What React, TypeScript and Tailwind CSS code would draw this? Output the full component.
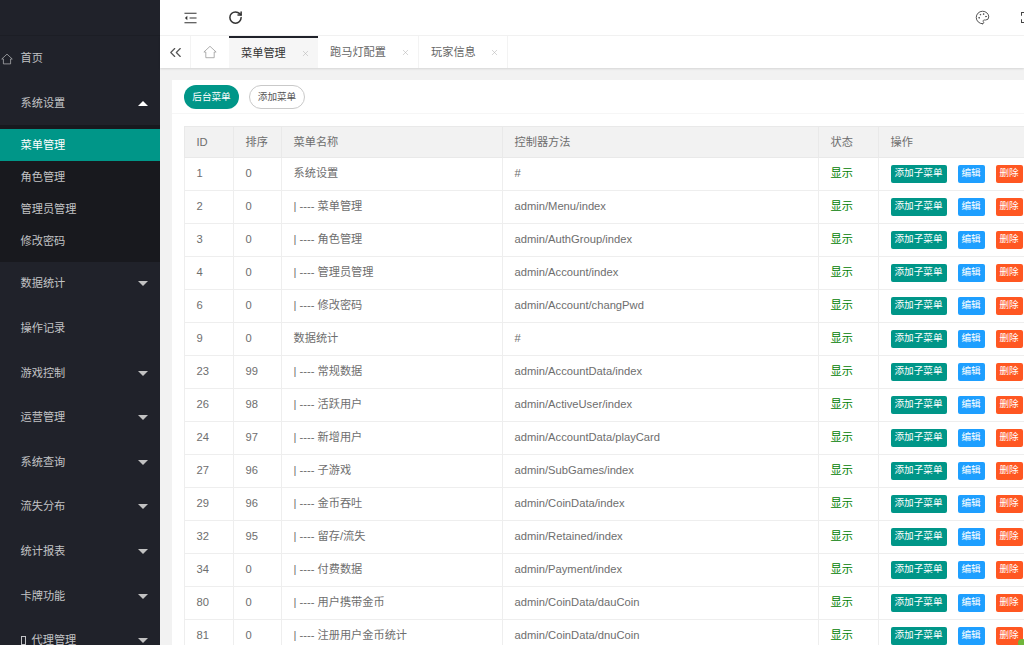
import React from 'react';
import { ChevronsLeft, Palette, RotateCw, X } from 'lucide-react';

const FONT = "font-['Liberation_Sans','Noto_Sans_CJK_SC',sans-serif]";

const menuTop = ['数据统计', '操作记录', '游戏控制', '运营管理', '系统查询', '流失分布', '统计报表', '卡牌功能'];
const subMenu = ['菜单管理', '角色管理', '管理员管理', '修改密码'];

const rows = [
  ['1', '0', '系统设置', '#'],
  ['2', '0', '| ---- 菜单管理', 'admin/Menu/index'],
  ['3', '0', '| ---- 角色管理', 'admin/AuthGroup/index'],
  ['4', '0', '| ---- 管理员管理', 'admin/Account/index'],
  ['6', '0', '| ---- 修改密码', 'admin/Account/changPwd'],
  ['9', '0', '数据统计', '#'],
  ['23', '99', '| ---- 常规数据', 'admin/AccountData/index'],
  ['26', '98', '| ---- 活跃用户', 'admin/ActiveUser/index'],
  ['24', '97', '| ---- 新增用户', 'admin/AccountData/playCard'],
  ['27', '96', '| ---- 子游戏', 'admin/SubGames/index'],
  ['29', '96', '| ---- 金币吞吐', 'admin/CoinData/index'],
  ['32', '95', '| ---- 留存/流失', 'admin/Retained/index'],
  ['34', '0', '| ---- 付费数据', 'admin/Payment/index'],
  ['80', '0', '| ---- 用户携带金币', 'admin/CoinData/dauCoin'],
  ['81', '0', '| ---- 注册用户金币统计', 'admin/CoinData/dnuCoin'],
];

function HomeIcon({ className }: { className: string }) {
  return (
    <svg viewBox="0 0 16 16" fill="none" stroke="currentColor" strokeWidth="0.9" className={className}>
      <path d="M1 8 8 1.5 15 8H12.8V14.5H3.2V8Z" />
    </svg>
  );
}

function Arrow({ up }: { up?: boolean }) {
  return (
    <span
      className={
        up
          ? 'h-0 w-0 border-x-[5px] border-b-[5px] border-x-transparent border-b-white'
          : 'h-0 w-0 border-x-[5px] border-t-[5px] border-x-transparent border-t-[#c2c2c2]'
      }
    />
  );
}

function Sidebar() {
  return (
    <aside className="flex w-40 shrink-0 flex-col bg-[#20222a] text-[11.2px] text-[#c2c3c5]">
      <div className="h-9 shrink-0 border-b border-[#1c1e25]" />
      <div className="relative flex h-[45px] shrink-0 items-center pl-[20.5px]">
        <HomeIcon className="absolute left-[1px] top-[17px] h-[12px] w-[12px]" />
        首页
      </div>
      <div className="flex h-[44px] shrink-0 items-center justify-between pl-[20.5px] pr-3">
        系统设置
        <Arrow up />
      </div>
      <div className="flex h-[136.6px] shrink-0 flex-col bg-[#18191e] pt-1">
        {subMenu.map((name, i) => (
          <div
            key={name}
            className={
              i === 0
                ? 'flex h-8 items-center bg-[#009688] pl-[20.5px] text-white'
                : 'flex h-8 items-center pl-[20.5px]'
            }
          >
            {name}
          </div>
        ))}
      </div>
      {menuTop.map((name, i) => (
        <div key={name} className="flex h-[44.6px] shrink-0 items-center justify-between pl-[20.5px] pr-3">
          {name}
          {i !== 1 && <Arrow />}
        </div>
      ))}
      <div className="flex h-[44.6px] shrink-0 items-center justify-between pl-[20.5px] pr-3">
        <span className="flex items-center">
          <span className="mr-[6px] h-[9px] w-[5px] border border-[#c2c3c5]" />
          代理管理
        </span>
        <Arrow />
      </div>
    </aside>
  );
}

function TopBar() {
  return (
    <div className="flex h-9 shrink-0 items-center border-b border-[#f3f3f3] bg-white text-[#333]">
      <svg viewBox="0 0 14 12" className="ml-[24px] h-[12px] w-[13px] shrink-0" fill="none" stroke="currentColor" strokeWidth="1.1">
        <path d="M0.5 1H13.5M6 6H13.5M0.5 11H13.5" />
        <path d="M3.6 3.6 1 6 3.6 8.4Z" fill="currentColor" stroke="none" />
      </svg>
      <RotateCw className="ml-[31px] h-[15px] w-[15px] shrink-0" strokeWidth={2.4} />
      <Palette className="ml-[732px] h-[15px] w-[15px] shrink-0 text-[#555]" strokeWidth={1.6} />
      <svg viewBox="0 0 12 12" className="ml-[31px] h-[11px] w-[11px] shrink-0 text-[#444]" fill="none" stroke="currentColor" strokeWidth="1.2">
        <path d="M0.5 4V0.5H4M8 0.5H11.5V4M11.5 8V11.5H8M4 11.5H0.5V8" />
      </svg>
    </div>
  );
}

function Tab({ label, width, active }: { label: string; width: string; active?: boolean }) {
  return (
    <div
      className={
        (active
          ? 'border-t-2 border-t-[#20222a] bg-[#f6f6f6] text-[#333] '
          : 'border-r border-[#f3f3f3] text-[#666] ') +
        `flex h-full items-center justify-between pl-3 pr-2 ${width}`
      }
    >
      {label}
      <X className="h-[9px] w-[9px] text-[#b5b5b5]" strokeWidth={1.5} />
    </div>
  );
}

function TabBar() {
  return (
    <div className="flex h-8 shrink-0 items-stretch bg-white text-[11.2px] shadow-[0_1px_2px_rgba(0,0,0,0.12)]">
      <div className="flex w-[31px] items-center justify-center border-r border-[#f3f3f3] text-[#555]">
        <ChevronsLeft className="h-[19px] w-[19px]" strokeWidth={1.5} />
      </div>
      <div className="flex w-[38px] items-center justify-center text-[#999]">
        <HomeIcon className="h-[14px] w-[14px]" />
      </div>
      <Tab label="菜单管理" width="w-[89px]" active />
      <Tab label="跑马灯配置" width="w-[101px]" />
      <Tab label="玩家信息" width="w-[89px]" />
    </div>
  );
}

function MenuTable() {
  const th = 'border border-[#e9e9e9] px-[11.5px] pt-[2px] text-left font-normal';
  const td = 'border border-[#eeeeee] px-[11.5px]';
  return (
    <table className="w-[860px] table-fixed border-collapse text-[11.2px] text-[#6e6e6e]">
      <colgroup>
        <col className="w-[49px]" />
        <col className="w-[48px]" />
        <col className="w-[221px]" />
        <col className="w-[316px]" />
        <col className="w-[60px]" />
        <col className="w-[166px]" />
      </colgroup>
      <thead>
        <tr className="h-[30.5px] bg-[#f2f2f2]">
          <th className={th}>ID</th>
          <th className={th}>排序</th>
          <th className={th}>菜单名称</th>
          <th className={th}>控制器方法</th>
          <th className={th}>状态</th>
          <th className={th}>操作</th>
        </tr>
      </thead>
      <tbody>
        {rows.map((row) => (
          <tr key={row[0]} className="h-[33px]">
            <td className={td}>{row[0]}</td>
            <td className={td}>{row[1]}</td>
            <td className={td}>{row[2]}</td>
            <td className={td}>{row[3]}</td>
            <td className={td + ' text-[#008000]'}>显示</td>
            <td className={td + ' whitespace-nowrap'}>
              <div className="flex gap-[11px] text-[9.6px] text-white">
                <span className="flex h-[18px] w-14 items-center justify-center rounded-[2px] bg-[#009688]">添加子菜单</span>
                <span className="flex h-[18px] w-[27px] items-center justify-center rounded-[2px] bg-[#1e9fff]">编辑</span>
                <span className="flex h-[18px] w-[27px] items-center justify-center rounded-[2px] bg-[#ff5722]">删除</span>
              </div>
            </td>
          </tr>
        ))}
      </tbody>
    </table>
  );
}

export default function App() {
  return (
    <div className={`${FONT} relative flex h-[645px] w-[1024px] overflow-hidden bg-[#f2f2f2]`}>
      <Sidebar />
      <main className="flex min-w-0 flex-1 flex-col">
        <TopBar />
        <TabBar />
        <div className="ml-3 mt-3 w-[900px] flex-1 bg-white">
          <div className="flex h-[34px] items-center gap-[10px] border-b border-[#f6f6f6] pl-3 pt-px text-[9.6px]">
            <span className="flex h-6 w-[55px] items-center justify-center rounded-full bg-[#009688] text-white">后台菜单</span>
            <span className="flex h-6 w-[56px] items-center justify-center rounded-full border border-[#c9c9c9] text-[#555]">添加菜单</span>
          </div>
          <div className="pl-3 pt-3">
            <MenuTable />
          </div>
        </div>
      </main>
      <span className="absolute right-[-2px] top-[639px] h-2 w-2 rounded-full bg-[#6fb53a]" />
    </div>
  );
}
